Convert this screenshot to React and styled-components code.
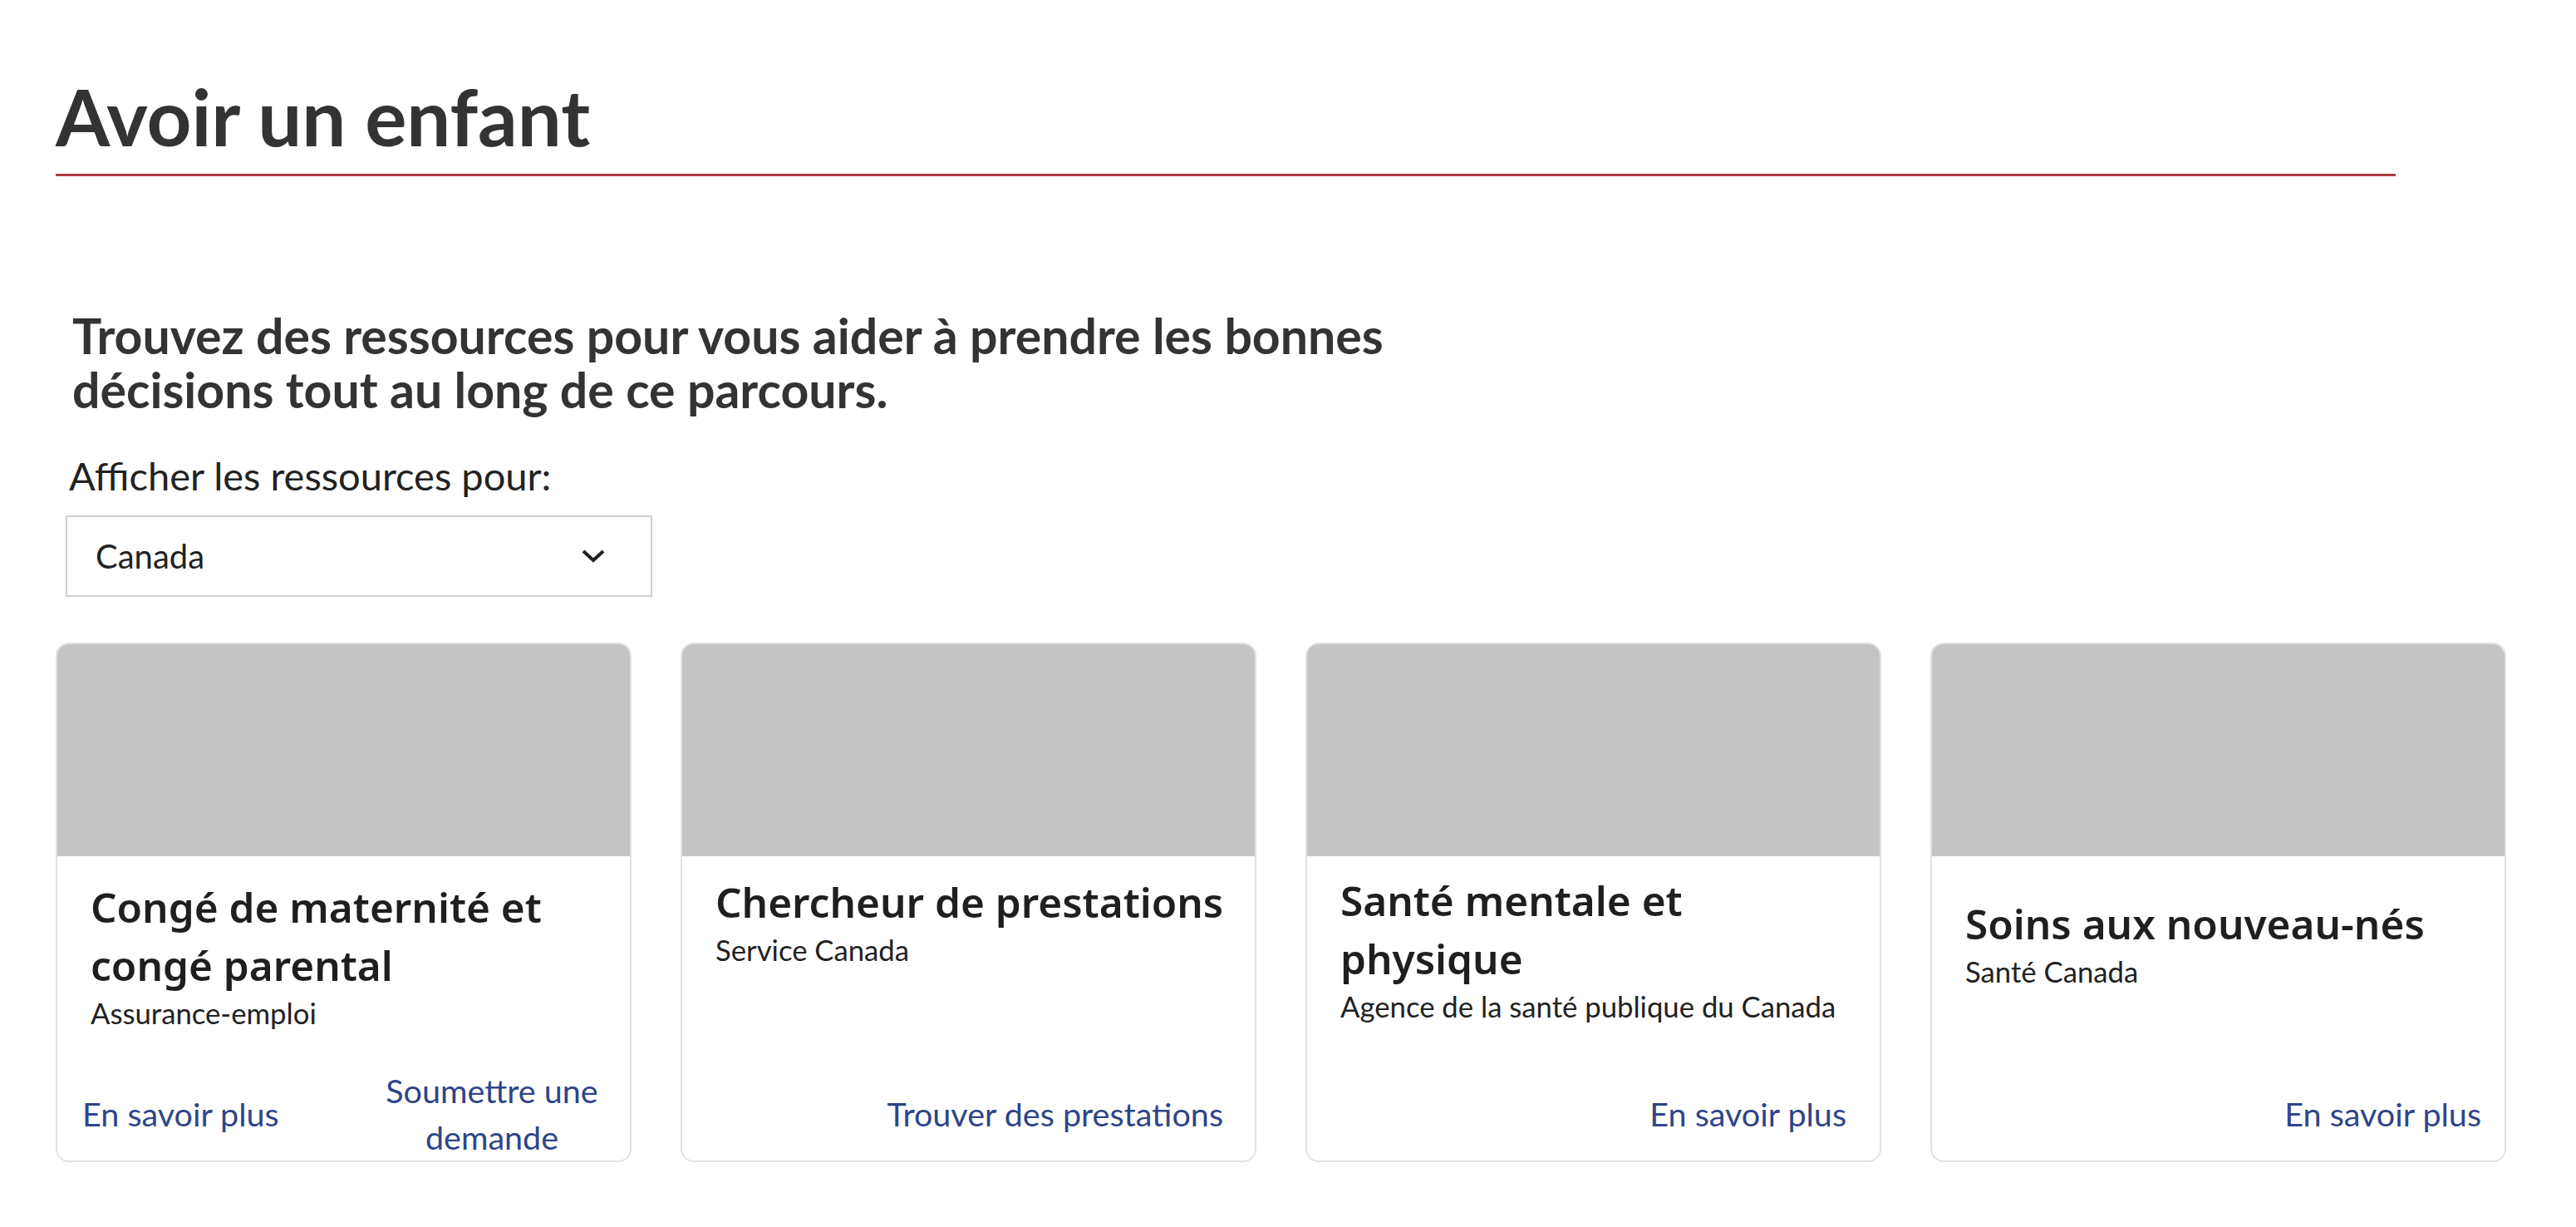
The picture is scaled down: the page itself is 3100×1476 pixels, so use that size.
import React from 'react';
import styled, { createGlobalStyle } from 'styled-components';

const GlobalStyle = createGlobalStyle`
  body {
    margin: 0;
    background: #fff;
    font-family: Lato, "Noto Sans", sans-serif;
  }
`;

const Page = styled.main`
  padding: 84px 0 60px 67px;
`;

const Title = styled.h1`
  width: 2816px;
  margin: 0;
  padding-bottom: 12px;
  border-bottom: 3px solid #af3c43;
  font-family: Lato, sans-serif;
  font-weight: 700;
  font-size: 94px;
  line-height: 1.2;
  color: #333;
`;

const Intro = styled.section`
  margin-top: 159px;
  padding-left: 12px;
`;

const Lead = styled.h2`
  margin: 0 0 0 8px;
  font-family: Lato, sans-serif;
  font-weight: 700;
  font-size: 59px;
  line-height: 65px;
  color: #333;
  white-space: nowrap;
`;

const Label = styled.label`
  display: block;
  margin: 43px 0 0 4px;
  font-family: Lato, sans-serif;
  font-size: 47px;
  line-height: 56px;
  color: #222;
`;

const Select = styled.div`
  box-sizing: border-box;
  display: flex;
  align-items: center;
  justify-content: space-between;
  width: 706px;
  height: 98px;
  margin-top: 20px;
  padding: 0 55px 0 34px;
  border: 2px solid #cfcfcf;
  font-family: Lato, sans-serif;
  font-size: 40px;
  color: #222;
`;

const Cards = styled.div`
  display: grid;
  grid-template-columns: repeat(4, 693px);
  gap: 59px;
  margin-top: 55px;
`;

const Card = styled.article`
  box-sizing: border-box;
  display: flex;
  flex-direction: column;
  height: 625px;
  border: 2px solid #e2e2e2;
  border-radius: 16px;
  overflow: hidden;
  background: #fff;
`;

const Thumb = styled.div`
  height: 255px;
  background: #c4c4c4;
`;

const Body = styled.div`
  flex: 1;
  padding: ${({ $top }) => $top}px 30px 0 40px;
`;

const CardTitle = styled.h3`
  margin: 0;
  font-family: "Noto Sans", sans-serif;
  font-weight: 600;
  font-size: 49.5px;
  line-height: 70px;
  color: #1f1f1f;
`;

const Source = styled.p`
  margin: 0;
  font-family: Lato, sans-serif;
  font-size: 34.7px;
  line-height: 46px;
  color: #222;
`;

const Footer = styled.div`
  display: flex;
  align-items: center;
  justify-content: ${({ $split }) => ($split ? 'space-between' : 'flex-end')};
  height: 112px;
  padding: 0 ${({ $right }) => $right}px 0 30px;
`;

const Link = styled.a`
  font-family: Lato, sans-serif;
  font-size: 39.5px;
  line-height: 56px;
  text-align: center;
  color: #2e4588;
  text-decoration: none;

  & + & {
    max-width: 268px;
  }
`;

const Chevron = () => (
  <svg width="28" height="16" viewBox="0 0 28 16" fill="none">
    <polyline points="2,2 14,13 26,2" stroke="#222" strokeWidth="4" />
  </svg>
);

const resources = [
  {
    title: 'Congé de maternité et congé parental',
    source: 'Assurance-emploi',
    links: ['En savoir plus', 'Soumettre une demande'],
    top: 26,
    right: 32,
  },
  {
    title: 'Chercheur de prestations',
    source: 'Service Canada',
    links: ['Trouver des prestations'],
    top: 20,
    right: 38,
  },
  {
    title: 'Santé mentale et physique',
    source: 'Agence de la santé publique du Canada',
    links: ['En savoir plus'],
    top: 18,
    right: 40,
  },
  {
    title: 'Soins aux nouveau-nés',
    source: 'Santé Canada',
    links: ['En savoir plus'],
    top: 46,
    right: 28,
  },
];

const App = () => (
  <Page>
    <GlobalStyle />
    <Title>Avoir un enfant</Title>
    <Intro>
      <Lead>
        Trouvez des ressources pour vous aider à prendre les bonnes
        <br />
        décisions tout au long de ce parcours.
      </Lead>
      <Label>Afficher les ressources pour:</Label>
      <Select>
        <span>Canada</span>
        <Chevron />
      </Select>
    </Intro>
    <Cards>
      {resources.map((r) => (
        <Card key={r.title}>
          <Thumb />
          <Body $top={r.top}>
            <CardTitle>{r.title}</CardTitle>
            <Source>{r.source}</Source>
          </Body>
          <Footer $split={r.links.length > 1} $right={r.right}>
            {r.links.map((l) => (
              <Link key={l} href="#">
                {l}
              </Link>
            ))}
          </Footer>
        </Card>
      ))}
    </Cards>
  </Page>
);

export default App;
